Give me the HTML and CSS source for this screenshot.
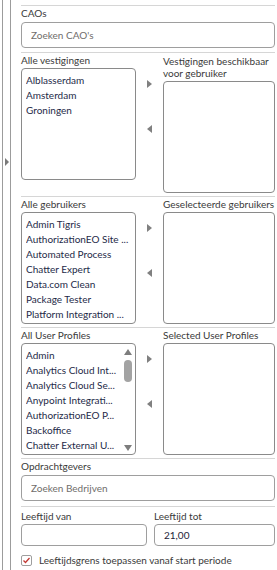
FILE: index.html
```html
<!DOCTYPE html>
<html lang="nl">
<head>
  <meta charset="UTF-8">
  <meta name="viewport" content="width=device-width, initial-scale=1.0">
  <title>Gebruiker instellingen</title>
  <link rel="stylesheet" href="styles.css">
</head>
<body>
  <div class="shell">
    <div class="rail"><span class="rail-arrow"></span></div>

    <div class="panel">
      <div class="block block-first">
        <div class="label">CAOs</div>
        <input class="search" type="text" placeholder="Zoeken CAO's">
      </div>

      <div class="block">
        <div class="dual">
          <div class="col">
            <div class="label">Alle vestigingen</div>
            <ul class="list">
              <li>Alblasserdam</li>
              <li>Amsterdam</li>
              <li>Groningen</li>
            </ul>
          </div>
          <div class="arrows">
            <span class="arrow-right"></span>
            <span class="arrow-left"></span>
          </div>
          <div class="col">
            <div class="label label-wrap">Vestigingen beschikbaar voor gebruiker</div>
            <ul class="list"></ul>
          </div>
        </div>
      </div>

      <div class="block">
        <div class="dual">
          <div class="col">
            <div class="label">Alle gebruikers</div>
            <ul class="list">
              <li>Admin Tigris</li>
              <li>AuthorizationEO Site ...</li>
              <li>Automated Process</li>
              <li>Chatter Expert</li>
              <li>Data.com Clean</li>
              <li>Package Tester</li>
              <li>Platform Integration ...</li>
            </ul>
          </div>
          <div class="arrows">
            <span class="arrow-right"></span>
            <span class="arrow-left"></span>
          </div>
          <div class="col">
            <div class="label">Geselecteerde gebruikers</div>
            <ul class="list"></ul>
          </div>
        </div>
      </div>

      <div class="block">
        <div class="dual">
          <div class="col">
            <div class="label">All User Profiles</div>
            <div class="list list-scroll">
              <ul class="list-items">
                <li>Admin</li>
                <li>Analytics Cloud Int...</li>
                <li>Analytics Cloud Se...</li>
                <li>Anypoint Integrati...</li>
                <li>AuthorizationEO P...</li>
                <li>Backoffice</li>
                <li>Chatter External U...</li>
              </ul>
              <div class="scrollbar">
                <span class="scroll-up"></span>
                <span class="scroll-thumb"></span>
                <span class="scroll-down"></span>
              </div>
            </div>
          </div>
          <div class="arrows">
            <span class="arrow-right"></span>
            <span class="arrow-left"></span>
          </div>
          <div class="col">
            <div class="label">Selected User Profiles</div>
            <ul class="list"></ul>
          </div>
        </div>
      </div>

      <div class="block block-search">
        <div class="label">Opdrachtgevers</div>
        <input class="search" type="text" placeholder="Zoeken Bedrijven">
      </div>

      <div class="block block-age">
        <div class="age">
          <div>
            <div class="label">Leeftijd van</div>
            <input class="field" type="text" value="">
          </div>
          <div>
            <div class="label">Leeftijd tot</div>
            <input class="field" type="text" value="21,00">
          </div>
        </div>
        <label class="check">
          <span class="box">
            <svg width="9" height="9" viewBox="0 0 9 9"><polyline points="1.5,4.5 3.5,6.5 7.5,2" fill="none" stroke="#c23934" stroke-width="1.3"/></svg>
          </span>
          Leeftijdsgrens toepassen vanaf start periode
        </label>
      </div>
    </div>
  </div>
</body>
</html>
```

FILE: styles.css
```css
body {
  margin: 0;
  font-family: Lato, "Segoe UI", sans-serif;
  font-size: 10px;
  color: #3a3a3a;
  background: #fff;
}
.shell {
  display: flex;
  min-height: 570px;
}
.rail {
  width: 7px;
  margin-left: 2px;
  border-left: 1px solid #9c9c9c;
  border-right: 1px solid #9c9c9c;
  padding-top: 158px;
}
.rail-arrow {
  display: block;
  width: 0;
  height: 0;
  margin-left: 2px;
  border-left: 4px solid #7a7a7a;
  border-top: 4px solid transparent;
  border-bottom: 4px solid transparent;
}
.panel {
  flex: 1;
  min-width: 0;
  padding: 0 2px 0 10px;
}
.block {
  border-top: 1px solid #d6d6d6;
  padding-bottom: 3px;
}
.block-first {
  margin-top: 5px;
  padding-bottom: 4px;
}
.block-search {
  padding-bottom: 5px;
}
.label {
  line-height: 14px;
  white-space: nowrap;
}
.label-wrap {
  white-space: normal;
  line-height: 12px;
  padding-top: 2px;
  margin-bottom: 2px;
}
.search, .field {
  display: block;
  width: 100%;
  box-sizing: border-box;
  font: inherit;
  color: #1e2438;
  border: 1px solid #9e9e9e;
  border-radius: 4px;
  background: #fff;
  outline: none;
}
.search {
  height: 26px;
  margin-top: 2px;
  padding: 0 9px;
}
.search::placeholder {
  color: #706e6b;
}
.dual {
  display: grid;
  grid-template-columns: 115px 27px 1fr;
  align-items: start;
}
.list {
  list-style: none;
  margin: 1px 0 0 0;
  padding: 4px 0 0 4px;
  height: 112px;
  box-sizing: border-box;
  border: 1px solid #8a8a8a;
  border-radius: 4px;
  color: #1e2a48;
  overflow: hidden;
}
.label-wrap + .list {
  margin-top: 0;
}
.list li, .list-items li {
  line-height: 15px;
  white-space: nowrap;
  overflow: hidden;
}
.list-scroll {
  display: flex;
  padding-right: 0;
}
.list-items {
  list-style: none;
  margin: 0;
  padding: 0;
  flex: 1;
  min-width: 0;
}
.scrollbar {
  width: 14px;
  display: flex;
  flex-direction: column;
  align-items: center;
  padding-top: 1px;
}
.scroll-up, .scroll-down {
  width: 0;
  height: 0;
  border-left: 4px solid transparent;
  border-right: 4px solid transparent;
}
.scroll-up {
  border-bottom: 6px solid #7d7d7d;
}
.scroll-down {
  margin-top: auto;
  margin-bottom: 3px;
  border-top: 6px solid #7d7d7d;
}
.scroll-thumb {
  width: 8px;
  height: 22px;
  margin-top: 5px;
  border-radius: 4px;
  background: #a3a3a3;
}
.arrows {
  display: flex;
  flex-direction: column;
  align-items: center;
  gap: 37px;
  padding-top: 27px;
}
.arrow-right, .arrow-left {
  width: 0;
  height: 0;
  border-top: 4px solid transparent;
  border-bottom: 4px solid transparent;
}
.arrow-right {
  border-left: 5px solid #808080;
}
.arrow-left {
  border-right: 5px solid #808080;
}
.age {
  display: grid;
  grid-template-columns: 126px 1fr;
  gap: 7px;
}
.age .label {
  padding-top: 2px;
}
.field {
  height: 22px;
  margin-top: 1px;
  padding: 0 9px;
}
.check {
  display: flex;
  align-items: center;
  gap: 7px;
  margin-top: 9px;
  line-height: 11px;
}
.box {
  width: 11px;
  height: 11px;
  box-sizing: border-box;
  border: 1px solid #9e9e9e;
  border-radius: 2px;
  display: flex;
  align-items: center;
  justify-content: center;
}
```
